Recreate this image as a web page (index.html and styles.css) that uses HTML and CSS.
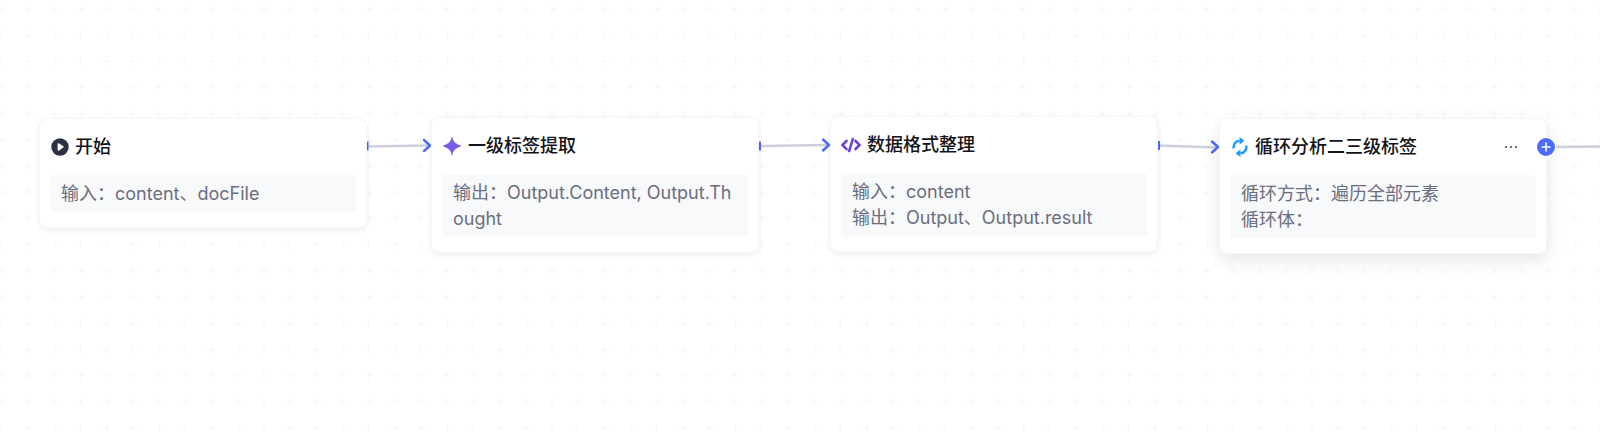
FILE: index.html
```html
<!DOCTYPE html>
<html lang="zh-CN">
<head>
<meta charset="utf-8">
<title>工作流</title>
<link rel="stylesheet" href="styles.css">
</head>
<body>
<main class="canvas">
  <svg class="grid" width="1600" height="432" aria-hidden="true">
    <defs>
      <pattern id="plus" x="-2.500" y="3.700" width="26.200" height="26.200" patternUnits="userSpaceOnUse">
        <path d="M0 5h9M4.500 .5v9" stroke="#f5f6f8" stroke-width="1" fill="none"/>
      </pattern>
    </defs>
    <rect width="1600" height="432" fill="url(#plus)"/>
  </svg>

  <svg class="edges" width="1600" height="432" aria-hidden="true">
    <g class="edge-line">
      <path d="M367 146.500L428 145.500"/>
      <path d="M758 146L828 145"/>
      <path d="M1157 145.500L1217 147.500"/>
      <path d="M1556 147L1600 146.500"/>
    </g>
    <g class="edge-port">
      <path d="M367 141.500v9"/>
      <path d="M759.500 141.500v9"/>
      <path d="M1158.500 141v9"/>
    </g>
    <g class="edge-arrow">
      <path d="M424 140l6 5.500-6 5.500"/>
      <path d="M823 139.500l6 5.500-6 5.500"/>
      <path d="M1212 141.500l6 5.500-6 5.500"/>
    </g>
  </svg>

  <article class="node node-start">
    <header class="node-head">
      <svg class="icon" viewBox="0 0 18 18"><circle cx="9" cy="9" r="8.700" fill="#2e3142"/><path d="M6.600 5.900c0-.6.600-.9 1.100-.6l4.600 3c.5.300.5 1 0 1.300l-4.600 3.100c-.5.300-1.100 0-1.100-.6z" fill="#fff"/></svg>
      <h2 class="title">开始</h2>
    </header>
    <div class="body">输入：content、docFile</div>
  </article>

  <article class="node node-llm">
    <header class="node-head">
      <svg class="icon icon-star" viewBox="0 0 18 18"><path d="M9 0c1.200 5 3 6.800 9 9-6 2.200-7.800 4-9 9-1.200-5-3-6.800-9-9 6-2.200 7.800-4 9-9z" fill="#7a5be6" stroke="#7a5be6" stroke-width=".6" stroke-linejoin="round"/></svg>
      <h2 class="title">一级标签提取</h2>
    </header>
    <div class="body">输出：Output.Content, Output.Thought</div>
  </article>

  <article class="node node-code">
    <header class="node-head">
      <svg class="icon icon-code" viewBox="0 0 20 18"><path d="M5.500 4.800L1.500 9l4 4.200M14.500 4.800l4 4.200-4 4.200M11.800 3L8.200 15" fill="none" stroke-width="2.600" stroke-linecap="round" stroke-linejoin="round"/></svg>
      <h2 class="title">数据格式整理</h2>
    </header>
    <div class="body">输入：content<br>输出：Output、Output.result</div>
  </article>

  <article class="node node-loop">
    <header class="node-head">
      <svg class="icon icon-sync" viewBox="0 0 18 20"><path class="sync" d="M2.700 11.500A6.400 6.400 0 0 1 8.500 3.700"/><path class="sync" d="M15.300 8.500A6.400 6.400 0 0 1 9.500 16.300"/><path class="sync-tip" d="M8.500 0 13.500 3.700 8.500 7.400z"/><path class="sync-tip" d="M9.500 20 4.500 16.300 9.500 12.600z"/></svg>
      <h2 class="title">循环分析二三级标签</h2>
      <span class="more" aria-label="更多"><i></i><i></i><i></i></span>
    </header>
    <div class="body">循环方式：遍历全部元素<br>循环体：</div>
    <span class="add" aria-label="添加">
      <svg width="10" height="10" viewBox="0 0 10 10"><path d="M5 1v8M1 5h8" stroke="#fff" stroke-width="1.600" stroke-linecap="round"/></svg>
    </span>
  </article>
</main>
</body>
</html>
```

FILE: styles.css
```css
* { box-sizing: border-box; }

html, body {
  margin: 0;
  height: 100%;
  background: #fff;
  overflow: hidden;
}

.canvas {
  position: relative;
  width: 1600px;
  height: 432px;
  font-family: Inter, "Noto Sans CJK SC", sans-serif;
}

.grid, .edges {
  position: absolute;
  left: 0;
  top: 0;
}

.edges { z-index: 1; }

.edge-line path {
  stroke: #cbd0dc;
  stroke-width: 2.500;
  fill: none;
}

.edge-port path {
  stroke: #4d6bfe;
  stroke-width: 3;
  fill: none;
}

.edge-arrow path {
  stroke: #4d6bfe;
  stroke-width: 2.400;
  fill: none;
  stroke-linecap: round;
  stroke-linejoin: round;
}

.node {
  position: absolute;
  width: 328px;
  padding: 0 10px;
  background: #fff;
  border: 1px solid rgba(6, 7, 9, 0.035);
  border-radius: 8px;
  box-shadow: 0 2px 6px rgba(0, 0, 0, 0.07);
  z-index: 2;
}

.node-start { left: 39px; top: 118px; height: 110px; }
.node-llm { left: 431px; top: 117px; height: 136px; }
.node-code { left: 830px; top: 116px; height: 136px; }
.node-loop {
  left: 1219px;
  top: 118px;
  height: 136px;
  box-shadow: 0 6px 18px rgba(0, 0, 0, 0.1);
}

.node-head {
  display: flex;
  align-items: center;
  gap: 6px;
  height: 56px;
  padding: 0 0 1px 1px;
}

.icon {
  width: 18px;
  height: 18px;
  flex: none;
}

.icon-star { margin-right: 1px; }

.icon-code {
  width: 20px;
  margin-left: -1px;
  stroke: #6b3fe0;
}

.icon-sync {
  height: 20px;
}

.title {
  margin: 0;
  flex: 1;
  font-size: 18px;
  font-weight: 500;
  line-height: 24px;
  color: #111318;
}

.body {
  padding: 5.500px 11px;
  font-size: 18px;
  line-height: 26px;
  color: #6b6e7d;
  background: #f8f9fb;
  border-radius: 4px;
  word-break: break-all;
}

.sync { fill: none; stroke: #1c9bfb; stroke-width: 2.500; }
.sync-tip { fill: #1c9bfb; }

.more {
  display: flex;
  gap: 3px;
  margin-right: 19px;
}

.more i {
  width: 2px;
  height: 2px;
  border-radius: 50%;
  background: #3a3c48;
}

.add {
  position: absolute;
  right: -9px;
  top: 19px;
  display: flex;
  align-items: center;
  justify-content: center;
  width: 18px;
  height: 18px;
  border-radius: 50%;
  background: #4d6bfe;
  box-shadow: 0 0 0 1.500px #fff;
}
```
